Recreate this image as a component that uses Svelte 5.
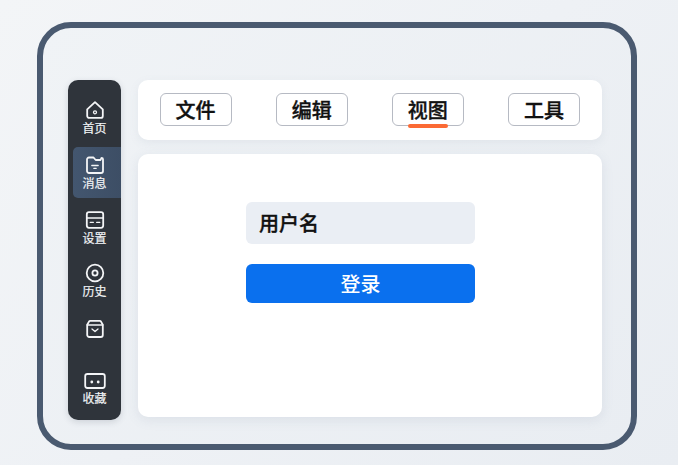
<script>
  const menus = [
    { label: '文件' },
    { label: '编辑' },
    { label: '视图', active: true },
    { label: '工具' }
  ];
</script>

<div class="page">
  <div class="frame">
    <aside class="sidebar">
      <div class="nav home">
        <svg viewBox="0 0 20 20" width="20" height="20"><path d="M2.200 9.300 10 2.200l7.800 7.100v6.600a2 2 0 0 1-2 2H4.200a2 2 0 0 1-2-2z"/><circle cx="10" cy="12.300" r="1.500" class="thin"/></svg>
        <span>首页</span>
      </div>
      <div class="nav msg">
        <svg viewBox="0 0 20 20" width="20" height="20"><path d="M2 4.500a2 2 0 0 1 2-2h4.500l2.200 2.500h4.800l1-2.200a1.500 1.500 0 0 1 1.500 1.500V16a2 2 0 0 1-2 2H4a2 2 0 0 1-2-2z"/><path d="M6.800 10.500h6.400M8.800 13.300h2.400" class="thin"/></svg>
        <span>消息</span>
      </div>
      <div class="nav set">
        <svg viewBox="0 0 20 20" width="20" height="20"><rect x="1.800" y="2.200" width="16.400" height="15.600" rx="2.200"/><path d="M2 8h16M5.200 12.300h3.200M11.600 12.300h3.200" class="thin"/></svg>
        <span>设置</span>
      </div>
      <div class="nav his">
        <svg viewBox="0 0 20 20" width="20" height="20"><circle cx="10" cy="10" r="8.300"/><circle cx="10" cy="10" r="2.600"/></svg>
        <span>历史</span>
      </div>
      <div class="nav bag">
        <svg viewBox="0 0 20 20" width="20" height="20"><path d="M2.200 5.800 4 2.600a1.500 1.500 0 0 1 1.300-.7h9.400a1.500 1.500 0 0 1 1.300.7l1.800 3.200V16a2 2 0 0 1-2 2H4.200a2 2 0 0 1-2-2z"/><path d="M2.200 6h15.600M7 10l3 2.600L13 10" class="thin"/></svg>
      </div>
      <div class="nav fav">
        <svg viewBox="0 0 22 18" width="22" height="18"><rect x="1.200" y="2" width="19.600" height="14" rx="2.200"/><circle cx="7.800" cy="10" r="1.400" class="dot"/><circle cx="14.200" cy="10" r="1.400" class="dot"/></svg>
        <span>收藏</span>
      </div>
    </aside>

    <div class="content">
      <header class="toolbar">
        {#each menus as m}
          <button class="menu" class:active={m.active}>{m.label}</button>
        {/each}
      </header>
      <main class="panel">
        <div class="field">用户名</div>
        <button class="login">登录</button>
      </main>
    </div>
  </div>
</div>

<style>
  :global(body) {
    margin: 0;
    font-family: "Noto Sans CJK SC", "Noto Sans", sans-serif;
  }
  .page {
    width: 678px;
    height: 465px;
    box-sizing: border-box;
    padding: 22px 41px 15px 37px;
    background: linear-gradient(135deg, #f3f5f7 0%, #eef1f5 50%, #e9edf2 100%);
    overflow: hidden;
  }
  .frame {
    box-sizing: border-box;
    width: 600px;
    height: 428px;
    border: 6px solid #4a5a70;
    border-radius: 34px;
    background: linear-gradient(135deg, #f0f3f6, #e9edf2);
    padding: 52px 29px 24px 25px;
    display: flex;
    gap: 17px;
  }
  .sidebar {
    width: 53px;
    height: 340px;
    flex: none;
    border-radius: 10px;
    background: #2f343b;
    color: #f1f3f5;
    display: flex;
    flex-direction: column;
    align-items: center;
    box-shadow: 0 2px 6px rgba(60, 70, 90, 0.18);
  }
  .nav {
    width: 100%;
    box-sizing: border-box;
    display: flex;
    flex-direction: column;
    align-items: center;
    font-size: 12px;
    line-height: 14px;
    flex: none;
    -webkit-text-stroke: 0.2px currentColor;
  }
  .nav span { margin-top: 1px; }
  .nav svg {
    display: block;
    fill: none;
    stroke: #f4f5f7;
    stroke-width: 1.800;
    stroke-linejoin: round;
    stroke-linecap: round;
  }
  .nav svg .thin { stroke-width: 1.300; }
  .nav svg .dot { fill: #f4f5f7; stroke: none; }
  .home { margin-top: 20px; }
  .msg {
    margin-top: 12px;
    margin-left: 5px;
    width: 48px;
    align-self: flex-start;
    height: 51px;
    padding: 8px 5px 0 0;
    background: linear-gradient(90deg, #43566f, #3d4e65);
    border-radius: 5px 0 0 5px;
  }
  .set { margin-top: 12px; }
  .his { margin-top: 18px; }
  .bag { margin-top: 21px; }
  .fav { margin-top: 33px; }
  .content {
    flex: 1;
    min-width: 0;
    display: flex;
    flex-direction: column;
    gap: 14px;
  }
  .toolbar {
    height: 60px;
    flex: none;
    box-sizing: border-box;
    padding: 13px 22px 0 21.500px;
    background: #fff;
    border-radius: 10px;
    display: flex;
    justify-content: space-between;
    align-items: flex-start;
    box-shadow: 0 3px 10px rgba(120, 135, 160, 0.1);
  }
  .menu {
    position: relative;
    width: 72px;
    height: 33px;
    box-sizing: border-box;
    padding: 0;
    border: 1px solid #b6bac3;
    border-radius: 6px;
    background: #fff;
    font: 500 20px/31px "Noto Sans CJK SC", sans-serif;
    -webkit-text-stroke: 0.35px #111;
    color: #111;
  }
  .menu.active::after {
    content: "";
    position: absolute;
    left: 15px;
    bottom: -3px;
    width: 40px;
    height: 4px;
    border-radius: 2px;
    background: #fb6a35;
  }
  .panel {
    height: 263px;
    flex: none;
    box-sizing: border-box;
    padding: 48px 0 0 108px;
    background: #fff;
    border-radius: 10px;
    display: flex;
    flex-direction: column;
    align-items: flex-start;
    box-shadow: 0 3px 12px rgba(120, 135, 160, 0.14);
  }
  .field {
    width: 229px;
    height: 42px;
    box-sizing: border-box;
    padding-left: 13px;
    background: #eaeef4;
    border-radius: 6px;
    font-weight: 500;
    -webkit-text-stroke: 0.35px #111;
    font-size: 20px;
    line-height: 42px;
    color: #111;
  }
  .login {
    margin-top: 20px;
    width: 229px;
    height: 39px;
    border: 0;
    padding: 0;
    border-radius: 6px;
    background: #0a70ee;
    color: #fff;
    font: 500 20px/37px "Noto Sans CJK SC", sans-serif;
  }
</style>
